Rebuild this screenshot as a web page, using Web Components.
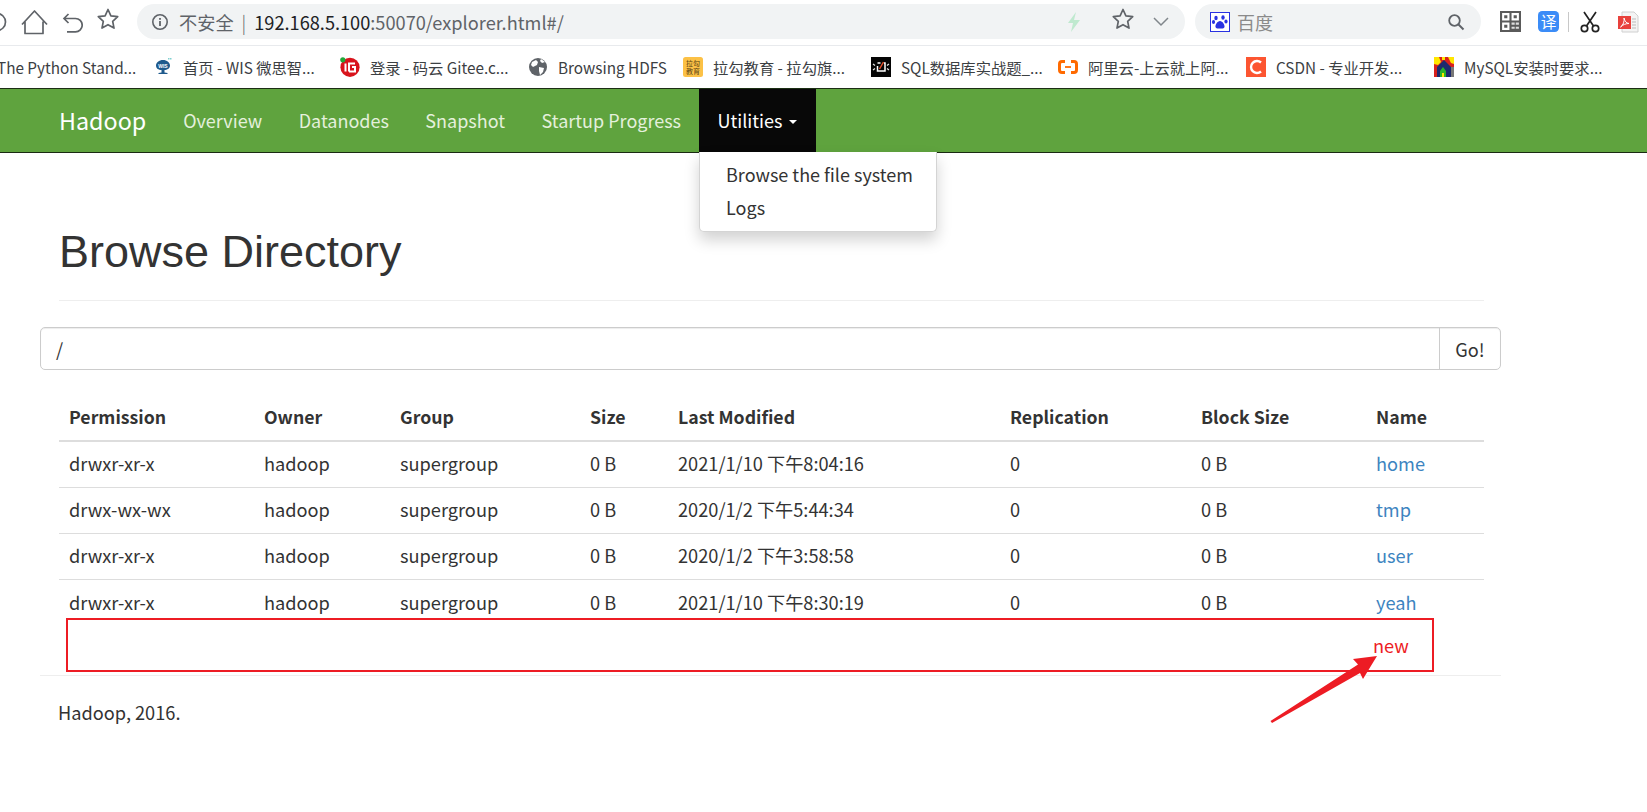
<!DOCTYPE html>
<html lang="zh">
<head>
<meta charset="utf-8">
<title>Browsing HDFS</title>
<style>
  html, body { margin: 0; height: 812px; overflow: hidden; background: #fff; }
  body { font-family: "Noto Sans CJK SC", "Noto Sans", sans-serif; color: #333; position: relative; }
  svg { display: block; }
</style>
</head>
<body>

<browser-toolbar url-host="192.168.5.100" url-rest=":50070/explorer.html#/"></browser-toolbar>

<bookmark-bar>
  <bookmark-item label="The Python Stand..." width="138" cut></bookmark-item>
  <bookmark-item label="首页 - WIS 微思智..." width="187">
    <svg slot="icon" width="20" height="20" viewBox="0 0 20 20"><path d="M3 8.500C3 5.500 6 3 10 3s7 2.500 7 5.500c0 3-3 4.500-5.500 4.500v2.500l3 .5v1h-9v-1l3-.5V13C5.500 13 3 11.500 3 8.500z" fill="#1f5a8c"/><text x="10" y="10.500" font-size="5" font-weight="700" fill="#fff" text-anchor="middle" font-family="Liberation Sans">WIS</text><rect x="17" y="1" width="1.500" height="1.500" fill="#7fd0d0"/><rect x="15" y="1" width="1.500" height="1.500" fill="#7fd0d0"/></svg>
  </bookmark-item>
  <bookmark-item label="登录 - 码云 Gitee.c..." width="188">
    <svg slot="icon" width="20" height="20" viewBox="0 0 20 20"><circle cx="10" cy="10.300" r="9.600" fill="#d8141c"/><path d="M5.500 6.500v8M9 14.500h6V10h-3M15 6.500H9v8" fill="none" stroke="#fff" stroke-width="2"/><circle cx="2.800" cy="2.800" r="2.600" fill="#21a83a"/></svg>
  </bookmark-item>
  <bookmark-item label="Browsing HDFS" width="155">
    <svg slot="icon" width="20" height="20" viewBox="0 0 20 20"><circle cx="10" cy="10" r="9" fill="#5f6368"/><path d="M4 5l4-2 2 2-1 3-4 2-2-2zM11 10l5 1-1 4-3 3-1-4zM13 2l4 3-3 1-2-2z" fill="#fff"/></svg>
  </bookmark-item>
  <bookmark-item label="拉勾教育 - 拉勾旗..." width="188">
    <svg slot="icon" width="20" height="20" viewBox="0 0 20 20"><rect width="20" height="20" rx="2.500" fill="#fcc146"/><text x="10" y="8.500" font-size="7" fill="#5a4413" text-anchor="middle" font-family="Noto Sans CJK SC">拉勾</text><text x="10" y="16.500" font-size="7" fill="#5a4413" text-anchor="middle" font-family="Noto Sans CJK SC">教育</text></svg>
  </bookmark-item>
  <bookmark-item label="SQL数据库实战题_..." width="187">
    <svg slot="icon" width="20" height="20" viewBox="0 0 20 20"><rect width="20" height="20" fill="#050505"/><path d="M6.500 6h3M13 6h1v8H6.500V9" fill="none" stroke="#fff" stroke-width="1.500"/><path d="M8.500 12l4-7" stroke="#e8502a" stroke-width="1.500"/><path d="M2 7l2 1.500M2 13l2-1.500M18 7l-2 1.500M18 13l-2-1.500" stroke="#e8e8e8" stroke-width="1.200"/></svg>
  </bookmark-item>
  <bookmark-item label="阿里云-上云就上阿..." width="188">
    <svg slot="icon" width="20" height="20" viewBox="0 0 20 20"><path d="M7 4.500H4Q1.500 4.500 1.500 7v6q0 2.500 2.500 2.500h3M13 4.500h3Q18.500 4.500 18.500 7v6q0 2.500-2.500 2.500h-3" fill="none" stroke="#ff6a00" stroke-width="3"/><path d="M7 10h6" stroke="#ff6a00" stroke-width="1.800"/></svg>
  </bookmark-item>
  <bookmark-item label="CSDN - 专业开发..." width="188">
    <svg slot="icon" width="20" height="20" viewBox="0 0 20 20"><rect width="20" height="20" fill="#fc5531"/><path d="M15 5.500A6 6 0 1 0 15 14.500" fill="none" stroke="#fff" stroke-width="2.400"/></svg>
  </bookmark-item>
  <bookmark-item label="MySQL安装时要求..." width="190">
    <svg slot="icon" width="20" height="20" viewBox="0 0 20 20"><rect width="20" height="20" fill="#d8201c"/><path d="M0 0h5l2 5-3 3-4-1zM14 0h6v7l-3-1zM8 0h3v3H8z" fill="#ffe600"/><path d="M10 3l7 7v10H3V10z" fill="#1c2a6e"/><path d="M6 20v-6l3-4 3 4v6z" fill="#28b528"/><path d="M8 20v-4h2v4z" fill="#ffe600"/><rect x="17" y="10" width="3" height="10" fill="#777"/></svg>
  </bookmark-item>
</bookmark-bar>

<hadoop-nav brand="Hadoop">
  <nav-link>Overview</nav-link>
  <nav-link>Datanodes</nav-link>
  <nav-link>Snapshot</nav-link>
  <nav-link>Startup Progress</nav-link>
  <nav-link open caret>Utilities
    <drop-menu slot="menu">
      <span>Browse the file system</span>
      <span>Logs</span>
    </drop-menu>
  </nav-link>
</hadoop-nav>

<browse-page>
  <page-header>Browse Directory</page-header>
  <path-bar value="/" action="Go!"></path-bar>
  <file-table>
    <file-row head perm="Permission" owner="Owner" group="Group" size="Size" modified="Last Modified" repl="Replication" block="Block Size" name="Name"></file-row>
    <file-row perm="drwxr-xr-x" owner="hadoop" group="supergroup" size="0 B" modified="2021/1/10 下午8:04:16" repl="0" block="0 B" name="home"></file-row>
    <file-row perm="drwx-wx-wx" owner="hadoop" group="supergroup" size="0 B" modified="2020/1/2 下午5:44:34" repl="0" block="0 B" name="tmp"></file-row>
    <file-row perm="drwxr-xr-x" owner="hadoop" group="supergroup" size="0 B" modified="2020/1/2 下午3:58:58" repl="0" block="0 B" name="user"></file-row>
    <file-row perm="drwxr-xr-x" owner="hadoop" group="supergroup" size="0 B" modified="2021/1/10 下午8:30:19" repl="0" block="0 B" name="yeah"></file-row>
  </file-table>
  <page-footer>Hadoop, 2016.</page-footer>
</browse-page>

<red-note>new</red-note>

<script>
// every element gets its own shadow root, markup and styles set in the class
function shadow(el, html) {
    el.attachShadow({ mode: "open" }).innerHTML = html;
}

const star = (color) => `<svg width="24" height="24" viewBox="0 0 24 24"><path d="M12 2.500l2.900 6.300 6.800.8-5 4.700 1.300 6.800-6-3.400-6 3.400 1.300-6.800-5-4.700 6.800-.8z" fill="none" stroke="${color}" stroke-width="1.700" stroke-linejoin="round"/></svg>`;
const baidu = `<svg width="20" height="20" viewBox="0 0 20 20"><rect x=".5" y=".5" width="19" height="19" fill="#fff" stroke="#2932e1"/><g fill="#2932e1"><ellipse cx="6" cy="6" rx="1.700" ry="2.300"/><ellipse cx="13" cy="5.500" rx="1.700" ry="2.300"/><ellipse cx="3.500" cy="10" rx="1.600" ry="2"/><ellipse cx="16" cy="9.500" rx="1.600" ry="2"/><path d="M10 9c2.500 0 5 4 4.500 6s-3 1.500-4.500 1.500-4 .5-4.500-1.500S7.500 9 10 9z"/></g></svg>`;

class BrowserToolbar extends HTMLElement {
    connectedCallback() {
        shadow(this, `
        <style>
          :host { display: flex; align-items: center; height: 46px; box-sizing: border-box; padding-bottom: 2px; border-bottom: 1px solid #e8eaed; background: #fff; }
          .nav { display: flex; align-items: center; width: 137px; flex: none; overflow: hidden; }
          .url { flex: none; width: 1048px; height: 35px; border-radius: 18px; background: #f1f3f4; display: flex; align-items: center; box-sizing: border-box; padding: 0 16px 0 14px; font-size: 18.200px; color: #5f6368; white-space: nowrap; }
          .url b { font-weight: 400; color: #202124; }
          .warn { margin: 0 8px 0 10px; }
          .sep { color: #5f6368; margin-right: 8px; font-weight: 300; }
          .right { margin-left: auto; display: flex; align-items: center; }
          .search { flex: none; margin-left: 10px; width: 286px; height: 35px; border-radius: 18px; background: #f1f3f4; display: flex; align-items: center; box-sizing: border-box; padding: 0 16px 0 15px; color: #8a8a8a; font-size: 18px; }
          .search span { margin-left: 7px; }
          .search svg:last-child { margin-left: auto; }
          .tools { display: flex; align-items: center; margin-left: 19px; }
        </style>
        <div class="nav">
          <svg style="margin-left:-14px" width="22" height="24" viewBox="0 0 22 24"><circle cx="11" cy="12" r="8.500" fill="none" stroke="#5f6368" stroke-width="1.700"/></svg>
          <svg style="margin-left:12px" width="28" height="28" viewBox="0 0 28 28"><path d="M2 16.500L14.500 3 27 16.500M5 13.500V25.500H23V13.500" fill="none" stroke="#5f6368" stroke-width="1.700" stroke-linejoin="round"/></svg>
          <svg style="margin-left:13px" width="22" height="24" viewBox="0 0 22 24"><path d="M7.500 4L3 8.500l4.500 4.500M3 8.500h11.500a6.700 6.700 0 0 1 0 13.400H6" fill="none" stroke="#5f6368" stroke-width="1.700"/></svg>
          <span style="margin-left:13px">${star("#5f6368")}</span>
        </div>
        <div class="url">
          <svg width="18" height="18" viewBox="0 0 18 18"><circle cx="9" cy="9" r="7.200" fill="none" stroke="#5f6368" stroke-width="1.600"/><rect x="8.100" y="8" width="1.800" height="5" fill="#5f6368"/><rect x="8.100" y="5" width="1.800" height="1.800" fill="#5f6368"/></svg>
          <span class="warn">不安全</span><span class="sep">|</span>
          <b>${this.getAttribute("url-host")}</b><span>${this.getAttribute("url-rest")}</span>
          <span class="right">
            <svg width="14" height="20" viewBox="0 0 14 20"><path d="M9 0L1 11h5l-2 9 9-12H7z" fill="#bfe9cf"/></svg>
            <span style="margin-left:30px">${star("#5f6368")}</span>
            <svg style="margin-left:18px" width="16" height="10" viewBox="0 0 16 10"><path d="M1 1l7 7 7-7" fill="none" stroke="#80868b" stroke-width="1.500"/></svg>
          </span>
        </div>
        <div class="search">
          ${baidu}<span>百度</span>
          <svg width="18" height="18" viewBox="0 0 18 18"><circle cx="7.500" cy="7.500" r="5.300" fill="none" stroke="#5f6368" stroke-width="1.800"/><path d="M11.500 11.500L16.500 16.500" stroke="#5f6368" stroke-width="2"/></svg>
        </div>
        <div class="tools">
          <svg width="21" height="21" viewBox="0 0 20 20"><rect width="20" height="20" fill="#5a5a5a"/><path d="M2 2h7v7H2zM11 2h7v7h-7zM2 11h7v7H2z" fill="#fff"/><path d="M4 4h3v3H4zM13 4h3v3h-3zM4 13h3v3H4z" fill="#5a5a5a"/><path d="M11 11h3v2h-3zM15 11h3v2h-3zM11 15h3v2h-3zM15 15h3v2h-3z" fill="#ddd"/></svg>
          <svg style="margin-left:17px" width="21" height="21" viewBox="0 0 20 20"><rect width="20" height="20" rx="4" fill="#3b8cf7"/><text x="10" y="16" font-size="15" fill="#fff" text-anchor="middle" font-family="Noto Sans CJK SC">译</text></svg>
          <span style="margin-left:9px;width:1px;height:20px;background:#c8c8c8"></span>
          <svg style="margin-left:10px" width="22" height="22" viewBox="0 0 22 22"><path d="M5 1l9.500 14M17 1L7.500 15" stroke="#222" stroke-width="1.700"/><circle cx="5.500" cy="17.500" r="3.200" fill="none" stroke="#222" stroke-width="1.700"/><circle cx="16.500" cy="17.500" r="3.200" fill="none" stroke="#222" stroke-width="1.700"/></svg>
          <svg style="margin-left:16px" width="22" height="22" viewBox="0 0 22 22"><path d="M5 1h12l4 4v16H5z" fill="#f4f4f4" stroke="#d0d0d0"/><path d="M15 8h4M15 11h4M15 14h4M15 17h4" stroke="#bbb"/><rect x="1" y="5" width="13" height="13" fill="#e8413c"/><path d="M3.500 16c3-2 4-6 3.500-9 1 3.500 2 5 5 5.500-3 0-6 1-8.500 3.500z" fill="none" stroke="#fff"/></svg>
        </div>`);
    }
}
customElements.define("browser-toolbar", BrowserToolbar);

class BookmarkBar extends HTMLElement {
    connectedCallback() {
        shadow(this, `
        <style>
          :host { display: flex; align-items: center; height: 42px; box-sizing: border-box; padding-bottom: 1px; overflow: hidden; background: #fff; }
        </style>
        <slot></slot>`);
    }
}
customElements.define("bookmark-bar", BookmarkBar);

class BookmarkItem extends HTMLElement {
    connectedCallback() {
        let cut = this.hasAttribute("cut");
        shadow(this, `
        <style>
          :host { display: flex; align-items: center; flex: none; width: ${this.getAttribute("width")}px; box-sizing: border-box; white-space: nowrap; font-size: 15.300px; color: #3c4043; padding-left: ${cut ? 0 : 15}px; }
          span { margin-left: ${cut ? -3 : 10}px; }
        </style>
        <slot name="icon"></slot><span>${this.getAttribute("label")}</span>`);
    }
}
customElements.define("bookmark-item", BookmarkItem);

class HadoopNav extends HTMLElement {
    connectedCallback() {
        shadow(this, `
        <style>
          :host { display: flex; height: 65px; box-sizing: border-box; border-top: 1px solid #1c2e14; border-bottom: 1.500px solid #1a2a12; background: #5fa33e; padding-left: 40px; position: relative; z-index: 2; }
          .brand { display: flex; align-items: center; padding: 0 18.500px 2px 19px; font-size: 23.300px; color: #fff; }
        </style>
        <div class="brand">${this.getAttribute("brand")}</div>
        <slot></slot>`);
    }
}
customElements.define("hadoop-nav", HadoopNav);

class NavLink extends HTMLElement {
    connectedCallback() {
        let open = this.hasAttribute("open");
        shadow(this, `
        <style>
          :host { display: flex; align-items: center; position: relative; padding: 0 18px 2px 18.500px; font-size: 18px; color: ${open ? "#fff" : "#e4f0dc"}; background: ${open ? "#080808" : "none"}; white-space: nowrap; }
          .caret { display: ${this.hasAttribute("caret") ? "inline-block" : "none"}; margin: 4px 1px 0 7px; border-top: 4.500px solid #fff; border-left: 4.500px solid transparent; border-right: 4.500px solid transparent; }
        </style>
        <slot></slot><span class="caret"></span><slot name="menu"></slot>`);
    }
}
customElements.define("nav-link", NavLink);

class DropMenu extends HTMLElement {
    connectedCallback() {
        shadow(this, `
        <style>
          :host { position: absolute; left: 0; top: 100%; width: 238px; height: 80px; box-sizing: border-box; padding: 6px 0 0 26px; background: #fff; border: 1px solid #d4d4d4; border-top: 0; border-radius: 0 0 5px 5px; box-shadow: 0 8px 15px rgba(0,0,0,.18); color: #333; font-size: 18px; display: flex; flex-direction: column; }
          ::slotted(span) { height: 33px; line-height: 33px; }
        </style>
        <slot></slot>`);
    }
}
customElements.define("drop-menu", DropMenu);

class BrowsePage extends HTMLElement {
    connectedCallback() {
        shadow(this, `
        <style>
          :host { display: block; width: 1461px; margin-left: 40px; font-size: 18.200px; color: #333; }
        </style>
        <slot></slot>`);
    }
}
customElements.define("browse-page", BrowsePage);

class PageHeader extends HTMLElement {
    connectedCallback() {
        shadow(this, `
        <style>
          :host { display: block; margin: 0 17px 0 19px; height: 148px; box-sizing: border-box; padding-top: 72px; border-bottom: 1px solid #eee; }
          h1 { margin: 0; font: 500 45px/54px "Liberation Sans", sans-serif; color: #333; }
        </style>
        <h1><slot></slot></h1>`);
    }
}
customElements.define("page-header", PageHeader);

class PathBar extends HTMLElement {
    connectedCallback() {
        shadow(this, `
        <style>
          :host { display: flex; height: 43px; margin-top: 26px; box-sizing: border-box; border: 1px solid #ccc; border-radius: 5px; box-shadow: inset 0 1px 1px rgba(0,0,0,.075); }
          .val { flex: 1; display: flex; align-items: center; padding-left: 15px; }
          .btn { width: 61px; box-sizing: border-box; border-left: 1px solid #ccc; display: flex; align-items: center; justify-content: center; }
        </style>
        <div class="val">${this.getAttribute("value")}</div>
        <div class="btn">${this.getAttribute("action")}</div>`);
    }
}
customElements.define("path-bar", PathBar);

class FileTable extends HTMLElement {
    connectedCallback() {
        shadow(this, `
        <style>
          :host { display: block; margin: 23px 17px 0 19px; }
        </style>
        <slot></slot>`);
    }
}
customElements.define("file-table", FileTable);

class FileRow extends HTMLElement {
    connectedCallback() {
        let head = this.hasAttribute("head");
        let cols = ["perm", "owner", "group", "size", "modified", "repl", "block", "name"];
        let cells = cols.map((c) => `<div class="${c}">${this.getAttribute(c)}</div>`).join("");
        shadow(this, `
        <style>
          :host { display: grid; grid-template-columns: 195px 136px 190px 88px 332px 191px 175px 1fr; align-items: center; height: ${head ? 49 : 46}px; box-sizing: border-box; padding-bottom: ${head ? 2 : 3}px; border-bottom: ${head ? "2px solid #ddd" : "1px solid #ddd"}; font-weight: ${head ? 700 : 400}; font-size: ${head ? 17.700 : 18.200}px; white-space: nowrap; }
          :host(:last-child) { border-bottom: 0; }
          div { padding-left: 10px; }
          .name { color: ${head ? "#333" : "#3d84c0"}; }
        </style>
        ${cells}`);
    }
}
customElements.define("file-row", FileRow);

class PageFooter extends HTMLElement {
    connectedCallback() {
        shadow(this, `
        <style>
          :host { display: block; margin-top: 49px; padding: 23px 0 0 18px; border-top: 1px solid #eee; }
        </style>
        <slot></slot>`);
    }
}
customElements.define("page-footer", PageFooter);

// hand drawn annotation on top of the page: the box and the arrow
class RedNote extends HTMLElement {
    connectedCallback() {
        shadow(this, `
        <style>
          :host { position: absolute; left: 66px; top: 618px; width: 1368px; height: 54px; box-sizing: border-box; border: 2px solid #ed1c24; color: #ed1c24; font-size: 18.200px; }
          span { position: absolute; left: 1305px; top: 12px; }
          svg { position: absolute; left: 1201px; top: 34px; overflow: visible; }
        </style>
        <span><slot></slot></span>
        <svg width="110" height="70" viewBox="0 0 110 70"><path d="M108 2L84 5l5 5.500L1.500 67l1.500 2 88-50 3 6z" fill="#ed1c24"/></svg>`);
    }
}
customElements.define("red-note", RedNote);
</script>
</body>
</html>
